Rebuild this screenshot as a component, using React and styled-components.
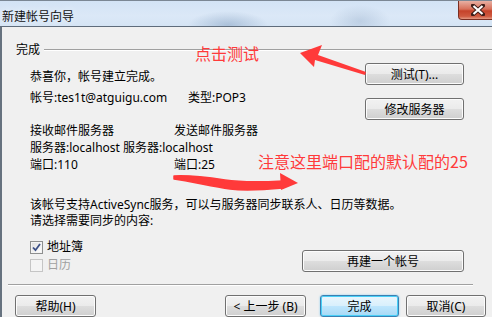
import React from 'react';
import styled, { createGlobalStyle, css } from 'styled-components';

const GlobalStyle = createGlobalStyle`
	* { box-sizing: border-box; }
	body {
		margin: 0;
		background: #f0f0f0;
		font-family: "Noto Sans", "Noto Sans CJK SC", sans-serif;
	}
`;

const Window = styled.div`
	position: relative;
	width: 492px;
	height: 317px;
	overflow: hidden;
	display: flex;
	flex-direction: column;
	font-size: 12px;
	color: #000;
`;

const TitleBar = styled.div`
	height: 29px;
	display: flex;
	align-items: flex-start;
	justify-content: space-between;
	border-top: 1px solid #7b8794;
	background:
		radial-gradient(ellipse 40px 14px at 228px 24px, rgba(120, 150, 185, 0.45), transparent),
		radial-gradient(ellipse 30px 16px at 360px 20px, rgba(140, 165, 195, 0.35), transparent),
		linear-gradient(to bottom, #d3e3f5, #dbe8f7 60%, #d5e4f4);
`;

const Title = styled.div`
	padding: 6px 0 0 2px;
	font-size: 12px;
	line-height: 18px;
	font-family: "Noto Sans CJK SC", sans-serif;
	color: #111;
	text-shadow: 0 0 6px #eef5fd;
`;

const CloseButton = styled.div`
	width: 40px;
	height: 19px;
	margin-right: -6px;
	display: flex;
	align-items: center;
	justify-content: center;
	border: 1px solid #7a2e22;
	border-top: none;
	border-radius: 0 0 4px 4px;
	background: linear-gradient(to bottom, #e8b0a3 0%, #d7705a 45%, #c5422a 55%, #cf5a40 85%, #e49a84 100%);
`;

const Body = styled.div`
	flex: 1;
	border-top: 1px solid #5f6c7b;
	border-left: 2px solid #66727f;
	background: #f0f0f0;
	display: flex;
	flex-direction: column;
	font-family: "Noto Sans", "Noto Sans CJK SC", sans-serif;
`;

const GroupHeader = styled.div`
	margin: 16px 0 0 14px;
	height: 14px;
	display: flex;
	align-items: center;
	gap: 4px;
	line-height: 14px;

	&::after {
		content: "";
		flex: 1;
		height: 0;
		border-top: 1px solid #a0a0a0;
		border-bottom: 1px solid #ffffff;
	}
`;

const Section = styled.div`
	display: flex;
	padding: 0 28px;
	margin-top: ${p => p.$top}px;
	align-items: ${p => p.$align || 'flex-start'};
	justify-content: space-between;
`;

const Lines = styled.div`
	display: flex;
	flex-direction: column;
	padding-top: ${p => p.$pad || 0}px;
	line-height: ${p => p.$lh}px;
`;

const Line = styled.div`
	display: flex;
	white-space: nowrap;
	color: ${p => p.$disabled ? '#a0a0a0' : '#000'};
`;

const Cell = styled.span`
	width: ${p => p.$w}px;
	flex: none;
`;

const ButtonStack = styled.div`
	display: flex;
	flex-direction: column;
	gap: 13px;
`;

const Button = styled.div`
	width: ${p => p.$w}px;
	height: 22px;
	flex: none;
	display: flex;
	align-items: center;
	justify-content: center;
	border: 1px solid #707070;
	border-radius: 3px;
	font-size: 12px;
	font-family: "Noto Sans", "Noto Sans CJK SC", sans-serif;
	color: #000;
	box-shadow: inset 0 0 0 1px #fcfcfc;
	background: linear-gradient(to bottom, #f2f2f2 0%, #ebebeb 48%, #dddddd 52%, #cfcfcf 100%);
	${p => p.$default && css`
		border-color: #3c7fb1;
		box-shadow: inset 0 0 0 1px #48d0f8, 0 0 2px #7cc8ee;
		background: linear-gradient(to bottom, #eaf6fd 0%, #d9f0fc 48%, #bee6fd 52%, #a7d9f5 100%);
	`}
`;

const CheckRow = styled.div`
	height: 18px;
	display: flex;
	align-items: center;
	gap: 4px;
	color: ${p => p.$disabled ? '#a0a0a0' : '#000'};
`;

const Box = styled.span`
	width: 13px;
	height: 13px;
	display: flex;
	align-items: center;
	justify-content: center;
	border: 1px solid ${p => p.$disabled ? '#c5c5c5' : '#8e8f8f'};
	background: ${p => p.$disabled
		? '#f4f4f4'
		: 'linear-gradient(135deg, #dcdcdc, #f6f6f6 70%, #ffffff)'};
	box-shadow: inset 0 0 0 1px #f4f4f4;
`;

const Separator = styled.div`
	margin: 10px 19px 0 6px;
	border-top: 1px solid #a0a0a0;
	border-bottom: 1px solid #ffffff;
`;

const Footer = styled.div`
	margin-top: 9px;
	padding-left: 13px;
	display: flex;
`;

const Spacer = styled.div`
	width: ${p => p.$w}px;
	flex: none;
`;

const Note = styled.div`
	position: absolute;
	left: ${p => p.$x}px;
	top: ${p => p.$y}px;
	font-size: 16px;
	line-height: 18px;
	color: #ff3a3a;
	font-family: "Noto Sans CJK SC", sans-serif;
	white-space: nowrap;
	pointer-events: none;
`;

const Overlay = styled.svg`
	position: absolute;
	left: 0;
	top: 0;
	pointer-events: none;
`;

function Check({ on, disabled, children }) {
	return (
		<CheckRow $disabled={disabled}>
			<Box $disabled={disabled}>
				{on && (
					<svg width="9" height="9" viewBox="0 0 9 9">
						<path d="M1 4.5 L3.5 7.2 L8 1" fill="none" stroke="#3b4f86" strokeWidth="1.8" />
					</svg>
				)}
			</Box>
			{children}
		</CheckRow>
	);
}

export default function App() {
	return (
		<>
			<GlobalStyle />
			<Window>
				<TitleBar>
					<Title>新建帐号向导</Title>
					<CloseButton>
						<svg width="14" height="12" viewBox="0 0 14 12">
							<path d="M2 1.5 L12 10.5 M12 1.5 L2 10.5" stroke="#3d1d18" strokeWidth="4" strokeLinecap="square" />
							<path d="M2.5 2 L11.5 10 M11.5 2 L2.5 10" stroke="#ffffff" strokeWidth="2.2" />
						</svg>
					</CloseButton>
				</TitleBar>
				<Body>
					<GroupHeader>完成</GroupHeader>

					<Section $top={6}>
						<Lines $pad={3} $lh={21}>
							<Line>恭喜你，帐号建立完成。</Line>
							<Line>
								<Cell $w={158}>帐号:tes1t@atguigu.com</Cell>
								<span>类型:POP3</span>
							</Line>
						</Lines>
						<ButtonStack>
							<Button $w={99}>测试(T)...</Button>
							<Button $w={99}>修改服务器</Button>
						</ButtonStack>
					</Section>

					<Section $top={2}>
						<Lines $lh={17}>
							<Line><Cell $w={144}>接收邮件服务器</Cell><span>发送邮件服务器</span></Line>
							<Line>服务器:localhost 服务器:localhost</Line>
							<Line><Cell $w={144}>端口:110</Cell><span>端口:25</span></Line>
						</Lines>
					</Section>

					<Section $top={24}>
						<Lines $lh={16}>
							<Line>该帐号支持ActiveSync服务，可以与服务器同步联系人、日历等数据。</Line>
							<Line>请选择需要同步的内容:</Line>
						</Lines>
					</Section>

					<Section $top={9} $align="flex-end">
						<Lines $lh={18}>
							<Check on>地址簿</Check>
							<Check disabled>日历</Check>
						</Lines>
						<Button $w={162} style={{ marginBottom: 2 }}>再建一个帐号</Button>
					</Section>

					<Separator />

					<Footer>
						<Button $w={81}>帮助(H)</Button>
						<Spacer $w={129} />
						<Button $w={81}>&lt; 上一步 (B)</Button>
						<Spacer $w={14} />
						<Button $w={79} $default>完成</Button>
						<Spacer $w={7} />
						<Button $w={80}>取消(C)</Button>
					</Footer>
				</Body>

				<Note $x={195} $y={44}>点击测试</Note>
				<Note $x={258} $y={152}>注意这里端口配的默认配的25</Note>

				<Overlay width="492" height="317" viewBox="0 0 492 317">
					<polygon
						points="300,53 322,45 318,55 366,72 365,75 315,60 314,67"
						fill="#ff3a3a"
					/>
					<path
						d="M174,176 C190,175 205,177 225,180 C245,183 265,182 283,181 L283,188 C262,190 245,191 230,189 C210,186 190,181 174,179 Z"
						fill="#ff3a3a"
						stroke="#ff3a3a"
						strokeWidth="1.5"
						strokeLinejoin="round"
					/>
					<polygon points="280,173 298,183 281,190" fill="#ff3a3a" />
				</Overlay>
			</Window>
		</>
	);
}
